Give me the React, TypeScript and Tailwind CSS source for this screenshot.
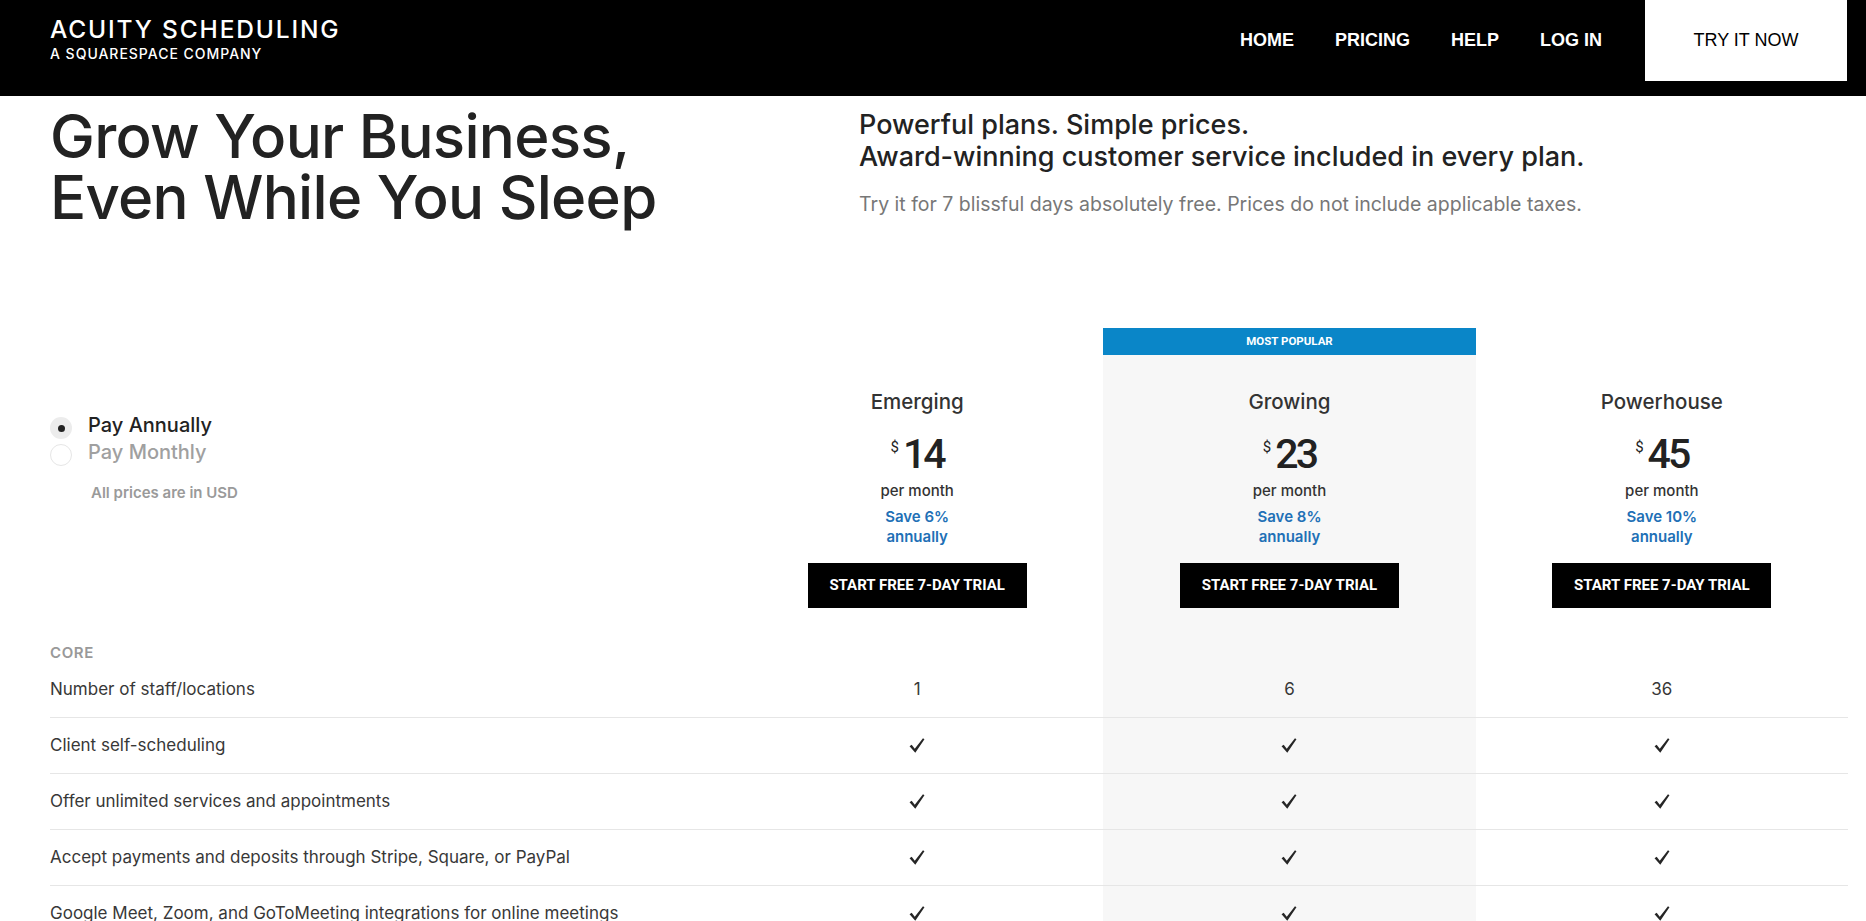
import React from 'react'

const PLANS = [
  { name: 'Emerging', price: 14, save: 6, popular: false },
  { name: 'Growing', price: 23, save: 8, popular: true },
  { name: 'Powerhouse', price: 45, save: 10, popular: false },
]

const ROWS: { label: string; values: (string | boolean)[] }[] = [
  { label: 'Number of staff/locations', values: ['1', '6', '36'] },
  { label: 'Client self-scheduling', values: [true, true, true] },
  { label: 'Offer unlimited services and appointments', values: [true, true, true] },
  { label: 'Accept payments and deposits through Stripe, Square, or PayPal', values: [true, true, true] },
  { label: 'Google Meet, Zoom, and GoToMeeting integrations for online meetings', values: [true, true, true] },
]

function Check() {
  return (
    <svg width="16" height="15" viewBox="0 0 15 14" className="text-[#262626]">
      <path d="M0.5 7.7 L2.5 6.3 L5.4 10 L13.1 0.3 L14.5 1.2 L5.9 13.7 Z" fill="currentColor" />
    </svg>
  )
}

function Header() {
  return (
    <header className="flex h-[96px] items-start justify-between bg-black pl-[50px] pr-[19px] text-white">
      <div className="pt-[14px] font-['Inter',sans-serif] font-medium">
        <div className="text-[24.5px] leading-[30px] tracking-[0.075em]">ACUITY SCHEDULING</div>
        <div className="text-[14px] leading-[19px] tracking-[0.07em]">A SQUARESPACE COMPANY</div>
      </div>
      <nav className="flex h-[81px] items-center font-['Liberation_Sans',Arial,sans-serif] text-[18px] font-bold">
        <a className="mr-[41px] ml-[3px]">HOME</a>
        <a className="mr-[41px]">PRICING</a>
        <a className="mr-[41px]">HELP</a>
        <a className="mr-[43px]">LOG IN</a>
        <a className="flex h-[81px] w-[202px] items-center justify-center bg-white font-normal text-black">
          TRY IT NOW
        </a>
      </nav>
    </header>
  )
}

function Hero() {
  return (
    <section className="flex pl-[50px] pt-[10px]">
      <h1 className="w-[809px] text-[60px] font-medium leading-[61px] tracking-[-0.012em] text-[#222]">
        Grow Your Business,
        <br />
        Even While You Sleep
      </h1>
      <div className="pt-[3px]">
        <p className="text-[27px] font-medium leading-[32px] text-[#222]">
          Powerful plans. Simple prices.
          <br />
          Award-winning customer service included in every plan.
        </p>
        <p className="mt-[17px] text-[19.5px] leading-[28px] text-[#777]">
          Try it for 7 blissful days absolutely free. Prices do not include applicable taxes.
        </p>
      </div>
    </section>
  )
}

function BillingToggle() {
  return (
    <div className="pt-[84px]">
      <label className="flex h-[27px] items-start">
        <span className="mt-[5px] flex h-[22px] w-[22px] items-center justify-center rounded-full bg-[#ececec]">
          <span className="h-[7px] w-[7px] rounded-full bg-[#222]" />
        </span>
        <span className="ml-[16px] text-[20px] font-medium leading-[27px] text-[#222]">Pay Annually</span>
      </label>
      <label className="flex h-[27px] items-start">
        <span className="mt-[5px] h-[22px] w-[22px] rounded-full border border-[#e6e6e6] bg-white" />
        <span className="ml-[16px] text-[20px] font-medium leading-[27px] text-[#a0a0a0]">Pay Monthly</span>
      </label>
      <p className="ml-[41px] mt-[17px] text-[15px] font-semibold leading-[20px] text-[#9a9a9a]">
        All prices are in USD
      </p>
    </div>
  )
}

function PlanHead({ plan }: { plan: (typeof PLANS)[number] }) {
  return (
    <div className="flex flex-col">
      {plan.popular ? (
        <div className="flex h-[27px] items-center justify-center bg-[#0a86c8] font-['Roboto',sans-serif] text-[11.5px] font-bold text-white">
          MOST POPULAR
        </div>
      ) : (
        <div className="h-[27px]" />
      )}
      <div className={`flex flex-1 flex-col items-center pb-[35px] pt-[33px] ${plan.popular ? 'bg-[#f7f7f7]' : ''}`}>
        <div className="text-[20.5px] font-medium leading-[28px] text-[#333]">{plan.name}</div>
        <div className="mt-[18px] flex items-start font-['Roboto',sans-serif] text-[#222]">
          <span className="mr-[4px] mt-[6px] text-[15px] leading-[15px]">$</span>
          <span className="text-[41px] font-medium leading-[41px] tracking-[-0.07em]">{plan.price}</span>
        </div>
        <div className="mt-[6px] text-[15px] font-medium leading-[20px] text-[#333]">per month</div>
        <div className="mt-[6px] text-center text-[15px] font-semibold leading-[20px] text-[#2170b6]">
          Save {plan.save}%
          <br />
          annually
        </div>
        <button className="mt-[16px] h-[45px] w-[219px] bg-black font-['Roboto',sans-serif] text-[15px] font-bold text-white">
          START FREE 7-DAY TRIAL
        </button>
      </div>
    </div>
  )
}

export default function App() {
  return (
    <div className="min-h-screen bg-white font-['Inter',sans-serif]">
      <Header />
      <Hero />

      <section className="mt-[100px] grid grid-cols-[681px_repeat(3,minmax(0,1fr))] pl-[50px] pr-[18px]">
        <BillingToggle />
        {PLANS.map((plan) => (
          <PlanHead key={plan.name} plan={plan} />
        ))}

        {/* section label */}
        <div className="text-[15px] font-semibold leading-[19px] tracking-[0.04em] text-[#999]">CORE</div>
        <div />
        <div className="bg-[#f7f7f7]" />
        <div />

        {ROWS.map((row) => (
          <React.Fragment key={row.label}>
            <div className="flex h-[56px] items-center border-b border-[#e6e6e6] text-[17px] text-[#383838]">
              {row.label}
            </div>
            {row.values.map((v, i) => (
              <div
                key={i}
                className={`flex h-[56px] items-center justify-center border-b border-[#e6e6e6] text-[17px] text-[#383838] ${
                  i === 1 ? 'bg-[#f7f7f7]' : ''
                }`}
              >
                {v === true ? <Check /> : v}
              </div>
            ))}
          </React.Fragment>
        ))}
      </section>
    </div>
  )
}
